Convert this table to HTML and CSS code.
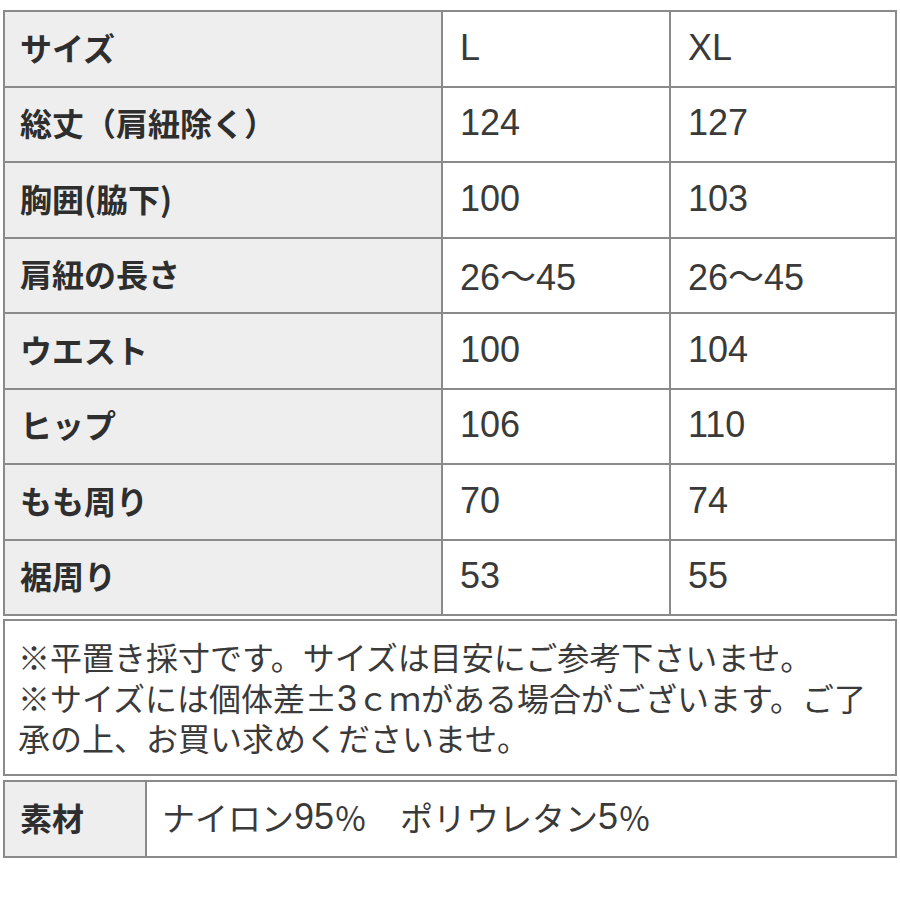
FILE: index.html
```html
<!DOCTYPE html>
<html lang="ja">
<head>
<meta charset="utf-8">
<title>サイズ表</title>
<link rel="stylesheet" href="styles.css">
</head>
<body>
<div class="page">
  <div class="sizes">
    <div class="cell label">サイズ</div><div class="cell value">L</div><div class="cell value">XL</div>
    <div class="cell label">総丈（肩紐除く）</div><div class="cell value">124</div><div class="cell value">127</div>
    <div class="cell label">胸囲(脇下)</div><div class="cell value">100</div><div class="cell value">103</div>
    <div class="cell label">肩紐の長さ</div><div class="cell value">26〜45</div><div class="cell value">26〜45</div>
    <div class="cell label">ウエスト</div><div class="cell value">100</div><div class="cell value">104</div>
    <div class="cell label">ヒップ</div><div class="cell value">106</div><div class="cell value">110</div>
    <div class="cell label">もも周り</div><div class="cell value">70</div><div class="cell value">74</div>
    <div class="cell label">裾周り</div><div class="cell value">53</div><div class="cell value">55</div>
  </div>
  <div class="notes">
    <p class="line">※平置き採寸です。サイズは目安にご参考下さいませ。</p>
    <p class="line">※サイズには個体差±<span class="num">3</span>ｃｍがある場合がございます。ご了</p>
    <p class="line">承の上、お買い求めくださいませ。</p>
  </div>
  <div class="material">
    <div class="cell label">素材</div>
    <div class="cell mvalue">ナイロン<span class="num">95</span>％　ポリウレタン<span class="num">5</span>％</div>
  </div>
</div>
</body>
</html>
```
FILE: styles.css
```css
html, body {
  margin: 0;
  padding: 0;
  background: #ffffff;
}

.page {
  padding: 10px 3px 0 3px;
  font-family: "Noto Sans CJK JP", sans-serif;
  color: #333333;
}

.sizes {
  display: grid;
  grid-template-columns: 438px 228px 226px;
  grid-auto-rows: 75.5px;
  border: 1px solid #8a8a8a;
  width: 892px;
}

.cell {
  box-sizing: border-box;
  border: 1px solid #8a8a8a;
  display: flex;
  align-items: center;
  white-space: nowrap;
}

.label {
  background: #eeeeee;
  font-weight: 700;
  font-size: 32px;
  padding-left: 15px;
  padding-bottom: 4px;
  color: #2e2e2e;
}

.value {
  background: #ffffff;
  font-family: "Liberation Sans", "Noto Sans CJK JP", sans-serif;
  font-size: 36px;
  padding-left: 17px;
  padding-bottom: 2px;
  color: #3a3a3a;
}

.notes {
  margin-top: 3px;
  width: 894px;
  height: 157px;
  box-sizing: border-box;
  border: 2px solid #8a8a8a;
  padding: 15px 0 0 13px;
  font-size: 32px;
  color: #3a3a3a;
}

.line {
  margin: 0;
  height: 40.5px;
  line-height: 40px;
  white-space: nowrap;
}

.num {
  font-family: "Liberation Sans", sans-serif;
  font-size: 36px;
  line-height: 0;
}

.material {
  margin-top: 4px;
  display: grid;
  grid-template-columns: 142px 750px;
  grid-auto-rows: 76px;
  border: 1px solid #8a8a8a;
  width: 892px;
}

.mvalue {
  background: #ffffff;
  font-size: 33px;
  padding-left: 15px;
  padding-bottom: 4px;
  color: #3a3a3a;
}
```
